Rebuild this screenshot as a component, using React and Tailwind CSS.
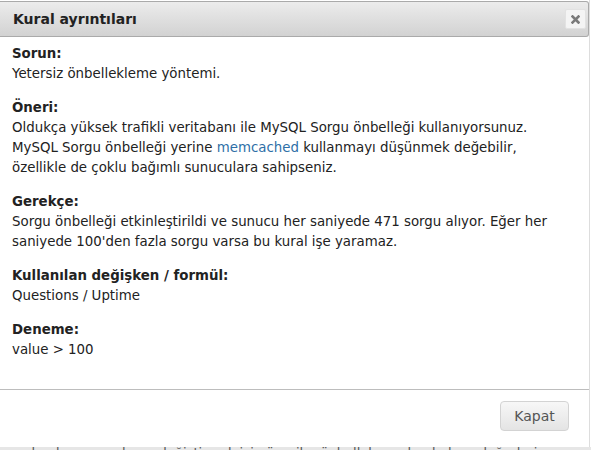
import React from 'react';

const sections = [
  { title: 'Sorun:', body: <>Yetersiz önbellekleme yöntemi.</> },
  {
    title: 'Öneri:',
    body: (
      <>
        Oldukça yüksek trafikli veritabanı ile MySQL Sorgu önbelleği kullanıyorsunuz.
        <br />
        MySQL Sorgu önbelleği yerine{' '}
        <a href="#" className="text-[#2e6fa7]">memcached</a> kullanmayı düşünmek değebilir,
        <br />
        özellikle de çoklu bağımlı sunuculara sahipseniz.
      </>
    ),
  },
  {
    title: 'Gerekçe:',
    body: (
      <>
        Sorgu önbelleği etkinleştirildi ve sunucu her saniyede 471 sorgu alıyor. Eğer her
        <br />
        saniyede 100'den fazla sorgu varsa bu kural işe yaramaz.
      </>
    ),
  },
  { title: 'Kullanılan değişken / formül:', body: <>Questions / Uptime</> },
  { title: 'Deneme:', body: <>value &gt; 100</> },
];

const App = () => {
  return (
    <div className="w-[591px] h-[450px] overflow-hidden bg-white flex flex-col font-['DejaVu_Sans',Verdana,sans-serif] text-[#222]">
      <div className="h-[447px] flex flex-col border-r border-[#dddddd] w-[590px]">
        {/* Title bar */}
        <div className="mt-px h-[36px] shrink-0 flex items-center justify-between pl-[13px] pr-px border border-l-0 border-[#aaaaaa] rounded-r-[3px] bg-gradient-to-b from-[#ececec] to-[#d2d2d2]">
          <span className="text-[14px] font-bold leading-none">Kural ayrıntıları</span>
          <button className="w-[21px] h-[20px] mr-[1px] flex items-center justify-center rounded-[2px] border border-[#e2e2e2] bg-[#f4f4f4]">
            <svg width="9" height="9" viewBox="0 0 9 9">
              <path d="M1.5 1.5 L7.5 7.5 M7.5 1.5 L1.5 7.5" stroke="#7a7a7a" strokeWidth="2.6" strokeLinecap="square" />
            </svg>
          </button>
        </div>

        {/* Content */}
        <div className="flex-1 pl-[12px] pt-[7px] text-[13.35px] leading-[20px]">
          {sections.map((s) => (
            <div key={s.title} className="mb-[14px]">
              <div className="font-bold">{s.title}</div>
              <div>{s.body}</div>
            </div>
          ))}
        </div>

        {/* Footer */}
        <div className="h-[58px] shrink-0 border-t border-[#bdbdbd] flex items-start justify-end pt-[11px] pr-[20px]">
          <button className="w-[69px] h-[30px] rounded-[4px] border border-[#d3d3d3] bg-gradient-to-b from-[#f7f7f7] to-[#e4e4e4] text-[14px] text-[#555555]">
            Kapat
          </button>
        </div>
      </div>

      {/* Page behind the dialog */}
      <div className="h-[3px] bg-[#e6e6e6] overflow-hidden">
        <div className="mt-[-1px] pl-[4px] text-[13px] leading-[14px] text-[#555] whitespace-nowrap">
          yapılandırma ayarlarını değiştirmek için öneriler önbellek yapılandırılmış değerlerin sorgu
        </div>
      </div>
    </div>
  );
};

export default App;
